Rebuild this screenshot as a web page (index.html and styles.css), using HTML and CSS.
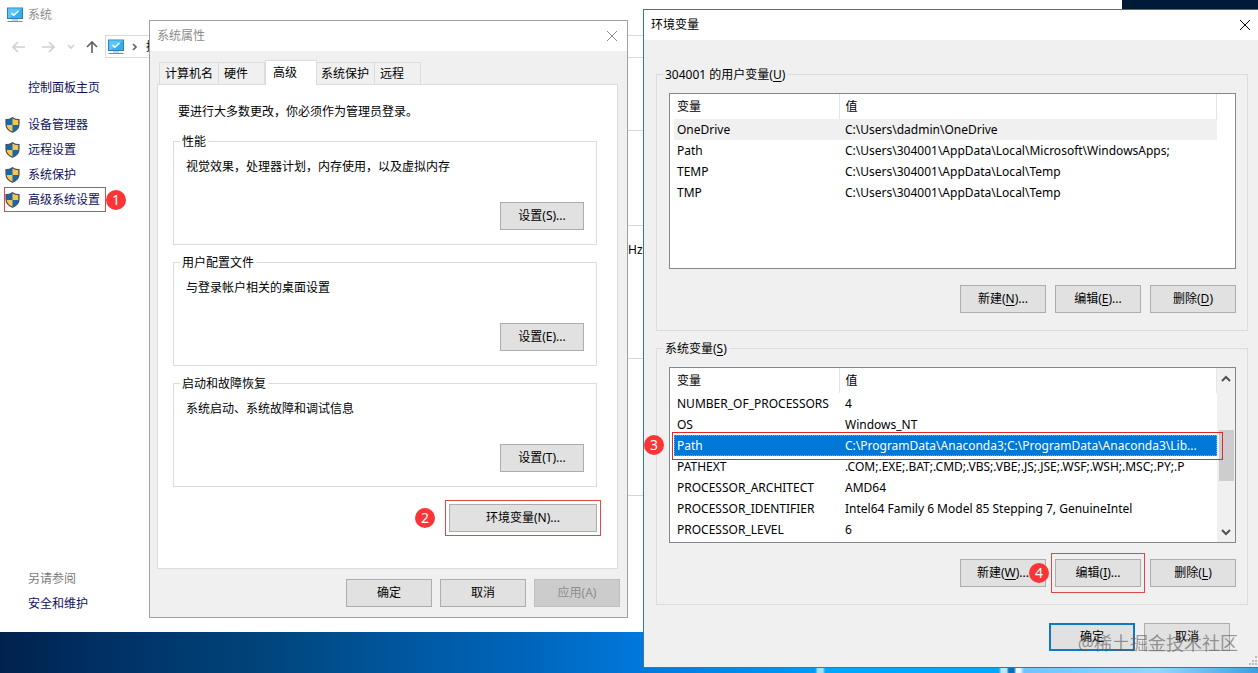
FILE: index.html
```
<!DOCTYPE html>
<html lang="zh-CN">

<head>
    <meta charset="UTF-8">
    <meta name="viewport" content="width=device-width, initial-scale=1.0">
    <title>环境变量</title>
    <link rel="stylesheet" href="styles.css">
</head>

<body>

    <svg class="defs" width="0" height="0" aria-hidden="true">
        <symbol id="icon-pc" viewBox="0 0 16 16">
            <rect x="0.5" y="1" width="15" height="10.5" fill="#35aef0" stroke="#2b83b8" />
            <path d="M1 1.5H15L3 11H1z" fill="#5cc4f8" />
            <path d="M4.5 6l2.3 2.3L11.5 4" fill="none" stroke="#fff" stroke-width="1.5" />
            <path d="M5 13h6" stroke="#7eb0cf" />
            <path d="M0.500 14.500h15" stroke="#4d9ac6" />
        </symbol>
        <symbol id="icon-shield" viewBox="0 0 15 16">
            <path d="M7.500 0.500C5.500 2 3.500 2.500 1 2.500V7c0 4 2.500 6.800 6.500 8.500C11.500 13.800 14 11 14 7V2.500C11.500 2.500 9.500 2 7.500 0.500z" fill="#1767ad" />
            <path d="M7.500 1C9.500 2.500 11.500 3 13.500 3v5h-6z" fill="#f7c64b" />
            <path d="M1.500 8h6v7C4 13.400 1.700 11.200 1.500 8z" fill="#f7c64b" />
            <path d="M7.500 0.700C5.500 2.200 3.500 2.700 1 2.700V7c0 4 2.500 6.800 6.500 8.300C11.500 13.800 14 11 14 7V2.700C11.500 2.700 9.500 2.200 7.500 0.700z" fill="none" stroke="#47525c" stroke-width="1.2" />
        </symbol>
        <symbol id="icon-close" viewBox="0 0 12 12">
            <path d="M1 1l10 10M11 1L1 11" fill="none" stroke="currentColor" stroke-width="1" />
        </symbol>
    </svg>

    <div class="system-window">
        <header class="system-title">
            <svg class="pc-icon"><use href="#icon-pc" /></svg>
            <span>系统</span>
        </header>

        <nav class="toolbar">
            <button class="nav-btn" aria-label="后退"><svg width="14" height="12" viewBox="0 0 14 12"><path d="M6 1L1 6l5 5M1 6h12" /></svg></button>
            <button class="nav-btn forward" aria-label="前进"><svg width="14" height="12" viewBox="0 0 14 12"><path d="M8 1l5 5-5 5M13 6H1" /></svg></button>
            <button class="nav-btn small" aria-label="最近"><svg width="8" height="6" viewBox="0 0 8 6"><path d="M1 1l3 3 3-3" /></svg></button>
            <button class="nav-btn up" aria-label="上移"><svg width="14" height="14" viewBox="0 0 14 14"><path d="M2 7l5-5 5 5M7 2v11" /></svg></button>
            <div class="address">
                <svg class="pc-icon"><use href="#icon-pc" /></svg>
                <svg class="crumb" width="6" height="8" viewBox="0 0 6 8"><path d="M1 1l3 3-3 3" /></svg>
                <span>控</span>
            </div>
        </nav>

        <div class="system-body">
            <aside class="sidebar">
                <div>
                    <a class="home" href="#">控制面板主页</a>
                    <ul class="tasks">
                        <li><a href="#"><svg class="shield"><use href="#icon-shield" /></svg>设备管理器</a></li>
                        <li><a href="#"><svg class="shield"><use href="#icon-shield" /></svg>远程设置</a></li>
                        <li><a href="#"><svg class="shield"><use href="#icon-shield" /></svg>系统保护</a></li>
                        <li><a class="marked" href="#"><svg class="shield"><use href="#icon-shield" /></svg>高级系统设置</a><span class="step">1</span></li>
                    </ul>
                </div>
                <div class="see-also">
                    <p>另请参阅</p>
                    <a href="#">安全和维护</a>
                </div>
            </aside>
            <main class="info">
                <section class="info-edition"></section>
                <section class="info-cpu">Hz</section>
                <section class="info-name"></section>
                <section></section>
            </main>
        </div>
    </div>

    <div class="dialog properties" role="dialog" aria-label="系统属性">
        <header class="dialog-title">
            <span>系统属性</span>
            <button class="close" aria-label="关闭"><svg width="12" height="12"><use href="#icon-close" /></svg></button>
        </header>
        <div class="properties-body">
            <div class="tabs" role="tablist">
                <button class="tab first" role="tab">计算机名</button>
                <button class="tab" role="tab">硬件</button>
                <button class="tab active" role="tab" aria-selected="true">高级</button>
                <button class="tab wide" role="tab">系统保护</button>
                <button class="tab" role="tab">远程</button>
            </div>
            <div class="panel" role="tabpanel">
                <p class="notice">要进行大多数更改，你必须作为管理员登录。</p>
                <fieldset class="group">
                    <legend>性能</legend>
                    <p>视觉效果，处理器计划，内存使用，以及虚拟内存</p>
                    <button class="btn">设置(S)...</button>
                </fieldset>
                <fieldset class="group">
                    <legend>用户配置文件</legend>
                    <p>与登录帐户相关的桌面设置</p>
                    <button class="btn">设置(E)...</button>
                </fieldset>
                <fieldset class="group">
                    <legend>启动和故障恢复</legend>
                    <p>系统启动、系统故障和调试信息</p>
                    <button class="btn">设置(T)...</button>
                </fieldset>
                <div class="env-row">
                    <span class="step">2</span>
                    <button class="btn marked">环境变量(N)...</button>
                </div>
            </div>
            <div class="actions">
                <button class="btn">确定</button>
                <button class="btn">取消</button>
                <button class="btn" disabled>应用(A)</button>
            </div>
        </div>
    </div>

    <div class="dialog variables" role="dialog" aria-label="环境变量">
        <header class="dialog-title">
            <span>环境变量</span>
            <button class="close" aria-label="关闭"><svg width="12" height="12"><use href="#icon-close" /></svg></button>
        </header>
        <div class="variables-body">
            <fieldset class="group">
                <legend>304001 的用户变量(<u>U</u>)</legend>
                <div class="list">
                    <div class="list-view">
                        <table>
                            <thead>
                                <tr><th>变量</th><th>值</th></tr>
                            </thead>
                            <tbody>
                                <tr class="current"><td>OneDrive</td><td>C:\Users\dadmin\OneDrive</td></tr>
                                <tr><td>Path</td><td>C:\Users\304001\AppData\Local\Microsoft\WindowsApps;</td></tr>
                                <tr><td>TEMP</td><td>C:\Users\304001\AppData\Local\Temp</td></tr>
                                <tr><td>TMP</td><td>C:\Users\304001\AppData\Local\Temp</td></tr>
                            </tbody>
                        </table>
                    </div>
                </div>
                <div class="actions">
                    <button class="btn">新建(<u>N</u>)...</button>
                    <button class="btn">编辑(<u>E</u>)...</button>
                    <button class="btn">删除(<u>D</u>)</button>
                </div>
            </fieldset>

            <fieldset class="group">
                <legend>系统变量(<u>S</u>)</legend>
                <div class="list">
                    <div class="list-view">
                        <table>
                            <thead>
                                <tr><th>变量</th><th>值</th></tr>
                            </thead>
                            <tbody>
                                <tr><td>NUMBER_OF_PROCESSORS</td><td>4</td></tr>
                                <tr><td>OS</td><td>Windows_NT</td></tr>
                                <tr class="selected"><td>Path</td><td>C:\ProgramData\Anaconda3;C:\ProgramData\Anaconda3\Lib...</td></tr>
                                <tr><td>PATHEXT</td><td>.COM;.EXE;.BAT;.CMD;.VBS;.VBE;.JS;.JSE;.WSF;.WSH;.MSC;.PY;.P</td></tr>
                                <tr><td>PROCESSOR_ARCHITECT</td><td>AMD64</td></tr>
                                <tr><td>PROCESSOR_IDENTIFIER</td><td>Intel64 Family 6 Model 85 Stepping 7, GenuineIntel</td></tr>
                                <tr><td>PROCESSOR_LEVEL</td><td>6</td></tr>
                            </tbody>
                        </table>
                    </div>
                    <div class="scrollbar">
                        <button aria-label="向上滚动"><svg width="10" height="8" viewBox="0 0 10 8"><path d="M1 6l4-4 4 4" /></svg></button>
                        <div class="thumb"></div>
                        <button aria-label="向下滚动"><svg width="10" height="8" viewBox="0 0 10 8"><path d="M1 2l4 4 4-4" /></svg></button>
                    </div>
                    <div class="row-mark"></div>
                    <span class="step">3</span>
                </div>
                <div class="actions">
                    <button class="btn">新建(<u>W</u>)...</button>
                    <div class="edit-mark">
                        <button class="btn">编辑(<u>I</u>)...</button>
                        <span class="step">4</span>
                    </div>
                    <button class="btn">删除(<u>L</u>)</button>
                </div>
            </fieldset>

            <div class="actions confirm">
                <button class="btn default">确定</button>
                <button class="btn">取消</button>
            </div>
        </div>
        <svg class="grip" width="10" height="10" viewBox="0 0 10 10">
            <path d="M7 0h2v2H7zM4 4h2v2H4zM7 4h2v2H7zM1 7h2v2H1zM4 7h2v2H4zM7 7h2v2H7z" />
        </svg>
    </div>

    <div class="watermark">@稀土掘金技术社区</div>

</body>

</html>
```
FILE: styles.css
```
* {
    box-sizing: border-box;
}

body {
    margin: 0;
    height: 100vh;
    position: relative;
    overflow: hidden;
    font-family: "Noto Sans", "Noto Sans CJK SC", sans-serif;
    font-size: 12px;
    line-height: 18px;
    color: #000;
    background: linear-gradient(90deg, #00214c 0, #003064 8%, #004379 20%, #005aa5 34%, #0064b8 41%, #0078dc 51%, #009bf8 64.8%, #9be4ff 65%, #9be4ff 65.4%, #00a6ff 65.6%, #00a9ff 79.4%, #b8ecff 79.6%, #b8ecff 80%, #0072c0 80.2%, #0072c0 80.6%, #e4f8ff 80.8%, #e4f8ff 81.1%, #6cc4ff 81.4%, #8fd8ff 92%, #3b9fe0 100%);
}

body::before {
    content: "";
    position: absolute;
    top: 0;
    right: 0;
    width: 50%;
    height: 20px;
    background: #001a38;
}

p,
ul {
    margin: 0;
    padding: 0;
    list-style: none;
}

a {
    color: #10105a;
    text-decoration: none;
}

button {
    font: inherit;
    color: inherit;
    padding: 0;
    border: none;
    background: none;
}

u {
    text-underline-offset: 2px;
}

.defs {
    position: absolute;
}

.step {
    display: block;
    width: 20px;
    height: 20px;
    flex: none;
    border-radius: 50%;
    background: #fb3435;
    color: #fff;
    font-size: 14px;
    line-height: 20px;
    text-align: center;
}

/* system window */
.system-window {
    position: absolute;
    top: 0;
    left: 0;
    right: 136px;
    bottom: 41px;
    display: flex;
    flex-direction: column;
    background: #fff;
}

.system-title {
    display: flex;
    align-items: center;
    gap: 5px;
    height: 29px;
    padding-left: 7px;
    color: #8c8c8c;
}

.pc-icon {
    width: 16px;
    height: 16px;
    flex: none;
}

.toolbar {
    display: flex;
    align-items: center;
    height: 35px;
    padding: 6px 10px 6px 12px;
}

.nav-btn {
    display: flex;
    margin-right: 15px;
}

.nav-btn svg,
.crumb {
    fill: none;
    stroke: #d0d0d0;
    stroke-width: 1.6;
}

.nav-btn.forward {
    margin-right: 12px;
}

.nav-btn.small {
    margin-right: 10px;
}

.nav-btn.up {
    margin-right: 6px;
}

.nav-btn.up svg,
.crumb {
    stroke: #606060;
}

.address {
    display: flex;
    align-items: center;
    flex: 1;
    height: 23px;
    padding-left: 2px;
    border: 1px solid #d9d9d9;
}

.crumb {
    margin: 0 8px;
}

.system-body {
    display: flex;
    flex: 1;
}

.sidebar {
    display: flex;
    flex-direction: column;
    justify-content: space-between;
    width: 150px;
    padding: 12px 0 16px;
}

.home {
    display: block;
    padding-left: 28px;
    line-height: 24px;
}

.tasks {
    margin-top: 12px;
}

.tasks li {
    display: flex;
    align-items: center;
    height: 25px;
    padding-left: 4px;
}

.tasks a {
    display: flex;
    align-items: center;
    gap: 8px;
    height: 25px;
    padding: 0 5px 0 0;
    border: 1px solid transparent;
}

.tasks a.marked {
    border-color: #e04848;
}

.shield {
    width: 15px;
    height: 16px;
}

.see-also {
    padding-left: 28px;
    line-height: 25px;
}

.see-also p {
    color: #7a7a7a;
}

.info {
    flex: 1;
    padding-top: 66px;
}

.info section {
    border-top: 1px solid #d5d5d5;
}

.info-edition {
    height: 95px;
}

.info-cpu {
    height: 133px;
    padding: 15px 0 0 478px;
}

.info-name {
    height: 137px;
}

/* dialogs */
.dialog {
    position: absolute;
    background: #f0f0f0;
}

.dialog-title {
    display: flex;
    align-items: center;
    justify-content: space-between;
    height: 30px;
    padding: 0 9px 0 7px;
    background: #fff;
}

.close {
    display: flex;
}

.group {
    min-width: 0;
    margin: 0;
    padding: 0 12px 14px;
    border: 1px solid #dcdcdc;
}

.group legend {
    height: 17px;
    margin-left: -6px;
    padding: 0 2px;
    line-height: 17px;
}

.btn {
    min-width: 86px;
    height: 28px;
    border: 1px solid #adadad;
    background: #e1e1e1;
}

.btn:disabled {
    border-color: #bfbfbf;
    background: #ccc;
    color: #8d8d8d;
}

.btn.default {
    border: 2px solid #0f78c8;
}

.actions {
    display: flex;
    justify-content: flex-end;
    gap: 9px;
}

/* system properties */
.properties {
    top: 20px;
    left: 149px;
    width: 479px;
    border: 1px solid #a0a0a0;
}

.properties .dialog-title {
    color: #8c8c8c;
}

.properties-body {
    padding: 9px 7px 10px;
}

.tabs {
    display: flex;
    align-items: flex-end;
    height: 24px;
    padding-left: 2px;
}

.tab {
    width: 46px;
    height: 22px;
    padding-left: 5px;
    border: 1px solid #dcdcdc;
    border-width: 1px 1px 0 0;
    text-align: left;
}

.tab.wide {
    width: 58px;
    padding-left: 4px;
}

.tab.first {
    width: 60px;
    border-left-width: 1px;
}

.tab.active {
    position: relative;
    width: 52px;
    height: 25px;
    margin-bottom: -1px;
    padding-left: 7px;
    border-left-width: 1px;
    background: #fff;
}

.panel {
    margin-right: 2px;
    padding: 18px 20px 36px 15px;
    border: 1px solid #dcdcdc;
    background: #fff;
}

.notice {
    padding-left: 5px;
    margin-bottom: 12px;
}

.panel .group {
    margin-bottom: 9px;
}

.panel .group p {
    margin-top: 8px;
}

.panel .group .btn {
    display: block;
    width: 84px;
    min-width: 0;
    margin: 26px 0 0 auto;
}

.env-row {
    display: flex;
    align-items: center;
    justify-content: flex-end;
    gap: 14px;
    margin-top: 17px;
}

.env-row .btn {
    width: 148px;
    outline: 1px solid #e04848;
    outline-offset: 3px;
}

.properties-body > .actions {
    gap: 8px;
    margin-top: 10px;
}

/* environment variables */
.variables {
    top: 9px;
    left: 643px;
    right: 0;
    border: 1px solid #2a7ab8;
    border-right: none;
}

.variables .dialog-title {
    padding-right: 7px;
}

.variables-body {
    padding: 26px 10px 16px 12px;
}

.variables .group {
    margin-bottom: 9px;
    padding: 0 11px 17px 12px;
}

.list {
    position: relative;
    display: flex;
    height: 176px;
    margin: 10px 0 16px;
    padding-left: 4px;
    border: 1px solid #828790;
    background: #fff;
}

.list-view {
    flex: 1;
    min-width: 0;
    overflow: hidden;
}

.list-view:last-child {
    margin-right: 18px;
}

table {
    width: 100%;
    border-collapse: collapse;
    table-layout: fixed;
}

th,
td {
    height: 21px;
    padding: 0 0 0 6px;
    text-align: left;
    font-weight: normal;
    white-space: nowrap;
}

th {
    height: 25px;
    border-right: 1px solid #e5e5e5;
}

th:first-child,
td:first-child {
    width: 165px;
    padding-left: 3px;
}

.current {
    background: #f0f0f0;
}

.selected {
    background: #0078d7;
    color: #fff;
    outline: 1px dotted #e08a3c;
    outline-offset: -1px;
}

.scrollbar {
    display: flex;
    flex-direction: column;
    align-items: center;
    width: 18px;
    padding: 2px;
    background: #f0f0f0;
}

.scrollbar button {
    display: flex;
    align-items: center;
    height: 17px;
}

.scrollbar svg {
    fill: none;
    stroke: #505050;
    stroke-width: 2;
}

.thumb {
    width: 15px;
    height: 51px;
    margin: 43px 0 auto;
    background: #cdcdcd;
}

.row-mark {
    position: absolute;
    top: 64px;
    left: 2px;
    right: 12px;
    height: 28px;
    border: 1px solid #e02a2a;
}

.list .step {
    position: absolute;
    top: 67px;
    left: -26px;
}

.edit-mark {
    position: relative;
}

.edit-mark::after {
    content: "";
    position: absolute;
    inset: -6px -4px;
    border: 1px solid #e04848;
    pointer-events: none;
}

.edit-mark .step {
    position: absolute;
    top: 4px;
    left: -26px;
}

.confirm {
    margin-top: 18px;
    padding-right: 18px;
}

.grip {
    position: absolute;
    right: 0;
    bottom: 1px;
    fill: #bdbdbd;
}

.watermark {
    position: absolute;
    right: 20px;
    bottom: 18px;
    font-size: 18px;
    line-height: 24px;
    color: rgba(90, 90, 90, 0.6);
}
```
